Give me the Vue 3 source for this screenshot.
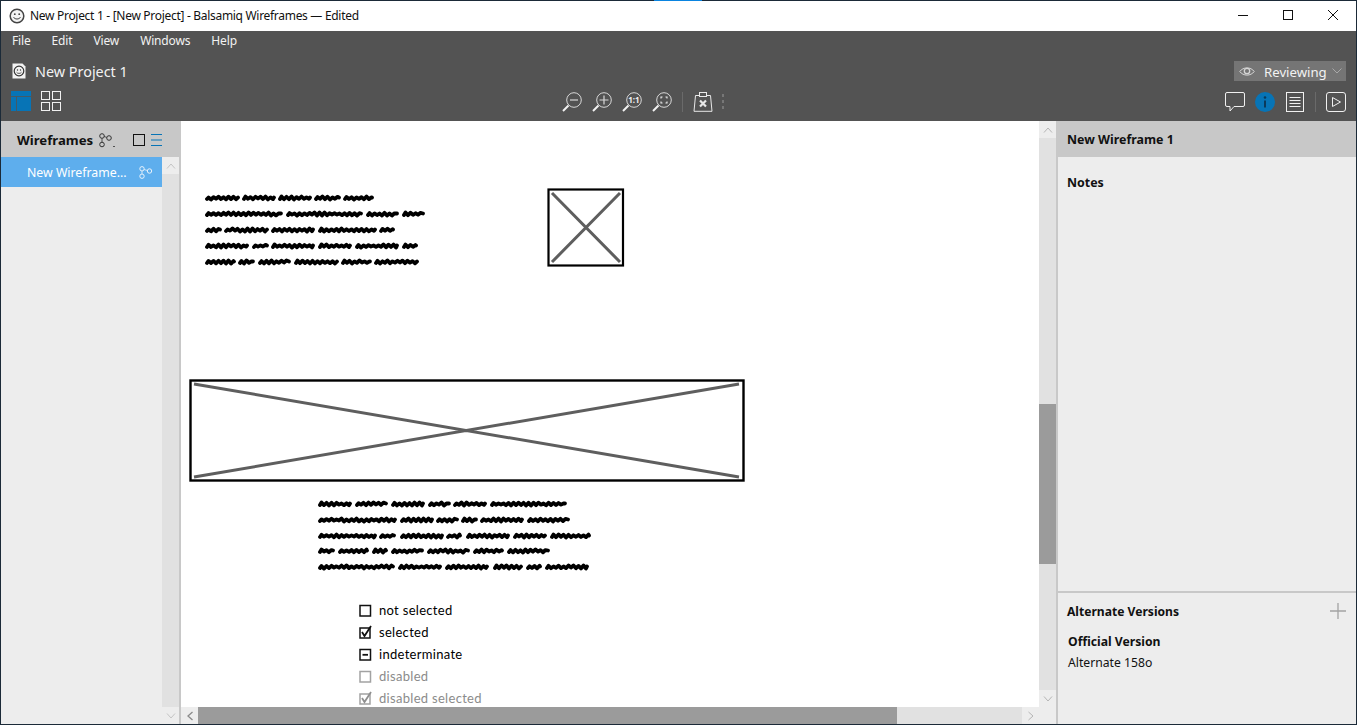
<script setup>
const menus = ['File', 'Edit', 'View', 'Windows', 'Help']

const block1 = {
  x: 25, y: 77,
  lines: [
    { y: 0, w: [[0, 33], [37, 69], [73, 105], [109, 134], [138, 167]] },
    { y: 16, w: [[0, 76], [81, 156], [161, 192], [197, 218]] },
    { y: 32, w: [[0, 15], [19, 62], [66, 108], [113, 170], [174, 188]] },
    { y: 48, w: [[0, 42], [47, 62], [66, 108], [113, 145], [150, 192], [197, 211]] },
    { y: 64, w: [[0, 29], [33, 48], [53, 84], [89, 132], [136, 165], [169, 212]] }
  ]
}
const block2 = {
  x: 138, y: 383,
  lines: [
    { y: 0, w: [[0, 32], [37, 68], [73, 105], [110, 131], [135, 167], [172, 247]] },
    { y: 16, w: [[0, 77], [82, 114], [118, 139], [143, 158], [162, 204], [209, 250]] },
    { y: 32, w: [[0, 57], [61, 76], [82, 124], [128, 142], [148, 190], [195, 227], [232, 271]] },
    { y: 47, w: [[0, 15], [20, 49], [54, 68], [73, 104], [109, 150], [155, 184], [189, 230]] },
    { y: 63, w: [[0, 75], [80, 122], [127, 169], [175, 203], [208, 222], [227, 269]] }
  ]
}

// greeked body copy: a lumpy pen stroke per word, seeded so it is stable between renders
let seed = 7
function rnd() {
  seed = (seed * 16807) % 2147483647
  return seed / 2147483647
}
function scribble(a, b, y) {
  let d = `M${a + 1} ${y + 1}`
  let up = true
  for (let x = a + 2.500; x < b - 1; x += 2.500) {
    const amp = 0.5 + rnd() * 1.100
    d += ` L${x} ${(y + (up ? -amp : amp)).toFixed(2)}`
    up = !up
  }
  return d + ` L${b - 1} ${y - 0.5}`
}
function blockPaths(b) {
  const out = []
  for (const l of b.lines) for (const w of l.w) out.push(scribble(b.x + w[0], b.x + w[1], b.y + l.y))
  return out.join(' ')
}
const scribblePath = blockPaths(block1) + ' ' + blockPaths(block2)
</script>

<template>
  <div class="window">
    <div class="accent"></div>
    <header class="titlebar">
      <svg class="smile" width="16" height="16" viewBox="0 0 16 16">
        <circle cx="8" cy="8" r="6.800" fill="#f4f4f4" stroke="#444" stroke-width="1.500" />
        <circle cx="5.800" cy="6.200" r="0.900" fill="#444" />
        <circle cx="10.200" cy="6.200" r="0.900" fill="#444" />
        <path d="M4.600 9.200c1 2.400 5.800 2.400 6.800 0" fill="none" stroke="#444" stroke-width="1" />
      </svg>
      <span class="title">New Project 1 - [New Project] - Balsamiq Wireframes — Edited</span>
      <div class="winctl">
        <svg width="10" height="10" viewBox="0 0 10 10"><path d="M0 5.500h10" stroke="#111" /></svg>
        <svg width="10" height="10" viewBox="0 0 10 10"><rect x=".5" y=".5" width="9" height="9" fill="none" stroke="#111" /></svg>
        <svg width="10" height="10" viewBox="0 0 10 10"><path d="M0 0l10 10M10 0L0 10" stroke="#111" /></svg>
      </div>
    </header>

    <section class="chrome">
      <nav class="menubar">
        <span v-for="m in menus" :key="m">{{ m }}</span>
      </nav>
      <div class="projectbar">
        <svg width="14" height="16" viewBox="0 0 14 16">
          <path d="M.5 .5h10l3 3v12H.5z" fill="#f2f2f2" />
          <circle cx="7" cy="8" r="4.800" fill="#f2f2f2" stroke="#333" stroke-width="1.200" />
          <circle cx="5.500" cy="7" r=".7" fill="#333" />
          <circle cx="8.500" cy="7" r=".7" fill="#333" />
          <path d="M4.500 9.200c.8 1.600 4.200 1.600 5 0" fill="none" stroke="#333" stroke-width=".8" />
        </svg>
        <span class="projectname">New Project 1</span>
        <div class="reviewing">
          <svg class="eye" width="16" height="11" viewBox="0 0 16 11">
            <path d="M.8 5.500C4 .7 12 .7 15.200 5.500 12 10.300 4 10.300 .8 5.500z" fill="none" stroke="#d6d6d6" />
            <circle cx="8" cy="5" r="2.700" fill="none" stroke="#d6d6d6" stroke-width="1.300" />
          </svg>
          <span>Reviewing</span>
          <svg class="chev" width="10" height="6" viewBox="0 0 10 6"><path d="M.5 .5L5 5 9.500 .5" fill="none" stroke="#a8a8a8" /></svg>
        </div>
      </div>
      <div class="toolbar">
        <div class="tgroup viewswitch">
          <svg width="20" height="20" viewBox="0 0 20 20">
            <path d="M0 0h20v20H0z" fill="#0774b6" />
            <path d="M0 5.500h20M5.500 5.500V20" stroke="#535353" stroke-width=".8" />
          </svg>
          <svg width="20" height="20" viewBox="0 0 20 20" fill="none" stroke="#f0f0f0">
            <rect x=".5" y=".5" width="8" height="8" />
            <rect x="11.500" y=".5" width="8" height="8" />
            <rect x=".5" y="11.500" width="8" height="8" />
            <rect x="11.500" y="11.500" width="8" height="8" />
          </svg>
        </div>
        <div class="tgroup zooms">
          <svg width="20" height="20" viewBox="0 0 20 20" fill="none" stroke="#d8d8d8">
            <circle cx="12" cy="8" r="7.300" /><path d="M8 8h8" stroke-width="1.200" /><path d="M6.500 13.500L1 19" stroke="#f2f2f2" stroke-width="2" />
          </svg>
          <svg width="20" height="20" viewBox="0 0 20 20" fill="none" stroke="#d8d8d8">
            <circle cx="12" cy="8" r="7.300" /><path d="M7.500 8h9M12 3.500v9" stroke-width="1.200" /><path d="M6.500 13.500L1 19" stroke="#f2f2f2" stroke-width="2" />
          </svg>
          <svg width="20" height="20" viewBox="0 0 20 20" fill="none" stroke="#d8d8d8">
            <circle cx="12" cy="8" r="7.300" /><text x="12" y="10.800" text-anchor="middle" class="oneone">1:1</text><path d="M6.500 13.500L1 19" stroke="#f2f2f2" stroke-width="2" />
          </svg>
          <svg width="20" height="20" viewBox="0 0 20 20" fill="none" stroke="#d8d8d8">
            <circle cx="12" cy="8" r="7.300" /><path d="M9 6.500V5h1.500M13.500 5H15v1.500M15 9.500V11h-1.500M10.500 11H9V9.500" stroke="#eee" stroke-width="1.100" /><path d="M6.500 13.500L1 19" stroke="#f2f2f2" stroke-width="2" />
          </svg>
          <i class="tsep"></i>
          <svg width="20" height="20" viewBox="0 0 20 20" fill="none" stroke="#e8e8e8">
            <path d="M2.500 3.500h15l1.500 15.800H1z" />
            <rect x="6.500" y=".5" width="7" height="4" fill="#535353" />
            <path d="M7 8.500l6 6M13 8.500l-6 6" stroke-width="2.200" />
          </svg>
          <span class="grip"><b></b><b></b><b></b></span>
        </div>
        <div class="tgroup rights">
          <svg width="20" height="20" viewBox="0 0 20 20" fill="none" stroke="#f0f0f0">
            <path d="M2 .5h16a1.500 1.500 0 0 1 1.500 1.500v11a1.500 1.500 0 0 1-1.500 1.500H9L5 19v-4.500H2A1.500 1.500 0 0 1 .5 13V2A1.500 1.500 0 0 1 2 .5z" />
          </svg>
          <svg width="20" height="20" viewBox="0 0 20 20">
            <circle cx="10" cy="10" r="10" fill="#0774b6" />
            <path d="M10 8.500v7" stroke="#0a3a5c" stroke-width="2" />
            <circle cx="10" cy="5.500" r="1.300" fill="#0a3a5c" />
          </svg>
          <svg class="listicon" width="18" height="20" viewBox="0 0 18 20" fill="none" stroke="#f0f0f0">
            <rect x=".5" y=".5" width="17" height="19" />
            <path d="M3.500 5.500h11M3.500 8.500h11M3.500 11.500h11M3.500 14.500h11" />
          </svg>
          <i class="tsep"></i>
          <svg width="20" height="20" viewBox="0 0 20 20" fill="none" stroke="#f0f0f0">
            <rect x=".5" y=".5" width="19" height="19" rx="2.500" />
            <path d="M6.500 5.500l8 4.500-8 4.500z" />
          </svg>
        </div>
      </div>
    </section>

    <main class="body">
      <aside class="left">
        <div class="lefthead">
          <strong>Wireframes</strong>
          <svg class="branch" width="18" height="15" viewBox="0 0 18 15" fill="none" stroke="#333">
            <circle cx="3" cy="3" r="2.300" /><circle cx="3" cy="11.500" r="2.300" /><circle cx="10" cy="5" r="2.300" />
            <path d="M3 5.300v4M5.100 3.500l2.700.9M14 13l1 1 1-1" stroke-width=".8" />
          </svg>
          <svg class="viewthumb" width="12" height="12" viewBox="0 0 12 12"><rect x=".5" y=".5" width="11" height="11" fill="none" stroke="#111" /></svg>
          <svg width="11" height="12" viewBox="0 0 11 12"><path d="M0 .5h11M0 6h11M0 11.500h11" stroke="#0774b6" /></svg>
        </div>
        <div class="leftbody">
          <div class="list">
            <div class="row">
              <span>New Wireframe...</span>
              <svg width="14" height="13" viewBox="0 0 14 13" fill="none" stroke="#e8f2fb">
                <circle cx="3" cy="2.800" r="2.200" /><circle cx="3" cy="10.200" r="2.200" /><circle cx="10.500" cy="5" r="2.200" />
                <path d="M3 5v3M5.100 3.500l3.200 1" stroke-width=".8" />
              </svg>
            </div>
          </div>
          <div class="lscroll">
            <div class="sbtn"><svg width="10" height="6" viewBox="0 0 10 6"><path d="M1 5.500L5 1l4 4.500" fill="none" stroke="#c4c4c4" /></svg></div>
            <div class="strack"></div>
            <div class="sbtn"><svg width="10" height="6" viewBox="0 0 10 6"><path d="M1 .5L5 5l4-4.500" fill="none" stroke="#c4c4c4" /></svg></div>
          </div>
        </div>
      </aside>

      <section class="center">
        <div class="centerrow">
          <div class="canvas">
            <svg class="art" width="858" height="586" viewBox="0 0 858 586">
              <path class="scrib" :d="scribblePath" fill="none" stroke="#000" stroke-width="3.800" stroke-linecap="round" stroke-linejoin="round" />
              <rect x="367.500" y="68.500" width="74.500" height="76" fill="#fff" stroke="#000" stroke-width="2.200" />
              <path d="M371 72l68 69M439 72l-68 69" stroke="#5e5e5e" stroke-width="3" />
              <rect x="9.500" y="259.500" width="553" height="100" fill="#fff" stroke="#000" stroke-width="2.400" />
              <path d="M13 263l545 93M558 263L13 356" stroke="#5e5e5e" stroke-width="3" />
            </svg>
            <ul class="checks">
              <li>
                <svg width="13" height="13" viewBox="0 0 13 13"><rect x="1" y="1.500" width="10.500" height="10.500" fill="none" stroke="#111" stroke-width="1.500" /></svg>
                not selected
              </li>
              <li>
                <svg width="13" height="14" viewBox="0 0 13 14"><rect x="1" y="3" width="10" height="10" fill="none" stroke="#111" stroke-width="1.500" /><path d="M3 7l2.500 4L12 1" fill="none" stroke="#111" stroke-width="1.800" /></svg>
                selected
              </li>
              <li>
                <svg width="13" height="13" viewBox="0 0 13 13"><rect x="1" y="1.500" width="10.500" height="10.500" fill="none" stroke="#111" stroke-width="1.500" /><path d="M3.500 6.800h5.500" stroke="#111" stroke-width="1.800" /></svg>
                indeterminate
              </li>
              <li class="off">
                <svg width="13" height="13" viewBox="0 0 13 13"><rect x="1" y="1.500" width="10.500" height="10.500" fill="none" stroke="#a2a2a2" stroke-width="1.500" /></svg>
                disabled
              </li>
              <li class="off">
                <svg width="13" height="14" viewBox="0 0 13 14"><rect x="1" y="3" width="10" height="10" fill="none" stroke="#a2a2a2" stroke-width="1.500" /><path d="M3 7l2.500 4L12 1" fill="none" stroke="#8f8f8f" stroke-width="1.800" /></svg>
                disabled selected
              </li>
            </ul>
          </div>
          <div class="vscroll">
            <div class="sbtn"><svg width="10" height="6" viewBox="0 0 10 6"><path d="M1 5.500L5 1l4 4.500" fill="none" stroke="#b5b5b5" /></svg></div>
            <div class="vtrack"><div class="vthumb"></div></div>
            <div class="sbtn"><svg width="10" height="6" viewBox="0 0 10 6"><path d="M1 .5L5 5l4-4.500" fill="none" stroke="#b5b5b5" /></svg></div>
          </div>
        </div>
        <div class="hscroll">
          <div class="hbtn"><svg width="6" height="10" viewBox="0 0 6 10"><path d="M5.500 1L1 5l4.500 4" fill="none" stroke="#8a8a8a" stroke-width="1.300" /></svg></div>
          <div class="htrack"><div class="hthumb"></div></div>
          <div class="hbtn"><svg width="6" height="10" viewBox="0 0 6 10"><path d="M.5 1L5 5 .5 9" fill="none" stroke="#b5b5b5" /></svg></div>
          <div class="hcorner"></div>
        </div>
      </section>

      <aside class="right">
        <div class="righthead">New Wireframe 1</div>
        <div class="notes"><strong>Notes</strong></div>
        <div class="alts">
          <div class="altshead">
            <strong>Alternate Versions</strong>
            <svg width="16" height="16" viewBox="0 0 16 16"><path d="M0 8h16M8 0v16" stroke="#a3a3a3" stroke-width="1.300" /></svg>
          </div>
          <div class="official">Official Version</div>
          <div class="alt">Alternate 158o</div>
        </div>
      </aside>
    </main>
  </div>
</template>

<style>
html, body { margin: 0; padding: 0; background: #fff; overflow: hidden; }
</style>

<style scoped>
.window {
  position: relative;
  box-sizing: border-box;
  width: 1357px;
  height: 725px;
  display: flex;
  flex-direction: column;
  border: 1px solid #1b2a38;
  font-family: "Noto Sans", "Open Sans", sans-serif;
  overflow: visible;
}
.accent {
  position: absolute;
  top: -1px;
  left: 653px;
  width: 48px;
  height: 1px;
  background: #0a84e0;
}
.titlebar {
  height: 30px;
  flex: none;
  box-sizing: border-box;
  display: flex;
  align-items: center;
  background: #fff;
  padding: 0 0 1px 8px;
}
.smile { margin-right: 5px; flex: none; }
.title { font-size: 12px; color: #111; letter-spacing: -0.3px; white-space: nowrap; }
.winctl { margin-left: auto; display: flex; align-items: center; gap: 35px; padding: 0 18px 1px 0; }

.chrome {
  flex: none;
  height: 90px;
  background: #535353;
  display: flex;
  flex-direction: column;
  color: #f2f2f2;
}
.menubar {
  display: flex;
  height: 20px;
  box-sizing: border-box;
  align-items: center;
  padding: 0 0 2px 11px;
  gap: 21px;
  font-size: 12px;
  letter-spacing: -0.15px;
}
.projectbar {
  display: flex;
  align-items: center;
  height: 40px;
  padding: 0 10px 0 11px;
  box-sizing: border-box;
  flex: none;
}
.projectname { margin-left: 9px; font-size: 14.400px; }
.reviewing {
  margin-left: auto;
  width: 112px;
  height: 20px;
  box-sizing: border-box;
  padding: 0 5px;
  background: #757575;
  display: flex;
  align-items: center;
  font-size: 13.200px;
  color: #f2f2f2;
}
.eye, .chev { flex: none; }
.reviewing span { margin: 2px 5px 0 9px; }
.toolbar {
  position: relative;
  display: flex;
  align-items: center;
  height: 20px;
  flex: none;
  padding: 0 10px 0 10px;
}
.tgroup { display: flex; align-items: center; }
.viewswitch { gap: 10px; }
.zooms { gap: 10px; margin: 1px 0 0 501px; }
.oneone { font: 700 8px "Noto Sans", sans-serif; fill: #f2f2f2; stroke: none; }
.tsep { display: block; width: 1px; height: 20px; background: #6a6a6a; }
.grip { display: flex; flex-direction: column; gap: 3px; margin-left: -1px; }
.grip b { display: block; width: 2px; height: 3px; background: #777; }
.rights { gap: 10px; margin: 1px 0 0 auto; }
.rights .tsep { margin-left: 1px; }
.listicon { margin-left: 1px; }

.body { flex: 1; min-height: 0; display: flex; }

.left {
  flex: none;
  width: 180px;
  background: #ededed;
  border-right: 2px solid #c8c8c8;
  display: flex;
  flex-direction: column;
  box-sizing: border-box;
}
.lefthead {
  height: 36px;
  flex: none;
  box-sizing: border-box;
  background: #c8c8c8;
  display: flex;
  align-items: center;
  padding: 2px 0 0 16px;
  color: #111;
  font-size: 13.200px;
}
.lefthead strong { font-weight: 700; }
.branch { margin-left: 6px; flex: none; }
.viewthumb { margin: 0 6px 0 16px; flex: none; }
.leftbody { flex: 1; min-height: 0; display: flex; }
.list { width: 161px; flex: none; }
.row {
  height: 30px;
  background: #5eaeed;
  color: #fff;
  font-size: 12.300px;
  display: flex;
  align-items: center;
  padding-left: 26px;
  gap: 12px;
  white-space: nowrap;
}
.lscroll { flex: 1; display: flex; flex-direction: column; background: #ededed; }
.strack { flex: 1; background: #e1e1e1; }
.sbtn { height: 17px; flex: none; display: flex; align-items: center; justify-content: center; }

.center { flex: none; width: 875px; display: flex; flex-direction: column; }
.centerrow { flex: 1; min-height: 0; display: flex; }
.canvas { position: relative; flex: 1; background: #fff; overflow: hidden; }
.art { position: absolute; left: 0; top: 0; display: block; }
.scrib { filter: blur(0.45px); }
.checks {
  position: absolute;
  left: 178px;
  top: 478px;
  margin: 0;
  padding: 0;
  list-style: none;
  font-family: "Lato", "Open Sans", sans-serif;
  font-size: 13px;
  color: #000;
}
.checks li { height: 22px; display: flex; align-items: center; gap: 7px; white-space: nowrap; letter-spacing: .3px; }
.checks .off { color: #8b8b8b; }
.vscroll { width: 17px; flex: none; background: #ededed; display: flex; flex-direction: column; }
.vtrack { position: relative; flex: 1; background: #e1e1e1; }
.vthumb { position: absolute; left: 0; right: 0; top: 266px; height: 160px; background: #9b9b9b; }
.hscroll { height: 17px; flex: none; display: flex; background: #ededed; }
.hbtn { width: 17px; flex: none; display: flex; align-items: center; justify-content: center; }
.htrack { position: relative; flex: 1; background: #e1e1e1; }
.hthumb { position: absolute; left: 0; top: 0; bottom: 0; width: 699px; background: #9b9b9b; }
.hcorner { width: 17px; flex: none; background: #ededed; }

.right {
  flex: 1;
  min-width: 0;
  border-left: 2px solid #c8c8c8;
  background: #ededed;
  display: flex;
  flex-direction: column;
  color: #111;
  font-size: 12.400px;
}
.righthead {
  height: 36px;
  flex: none;
  background: #c8c8c8;
  font-weight: 700;
  display: flex;
  align-items: center;
  padding-left: 9px;
}
.notes { flex: 1; padding: 17px 9px; }
.alts { height: 133px; flex: none; box-sizing: border-box; border-top: 2px solid #c8c8c8; padding: 9px 10px 0 9px; }
.altshead { display: flex; align-items: center; justify-content: space-between; height: 18px; font-size: 12.100px; }
.official { font-weight: 700; margin: 13px 0 0 1px; font-size: 12.200px; line-height: 18px; }
.alt { margin: 3px 0 0 1px; line-height: 18px; font-size: 12.200px; }
</style>
